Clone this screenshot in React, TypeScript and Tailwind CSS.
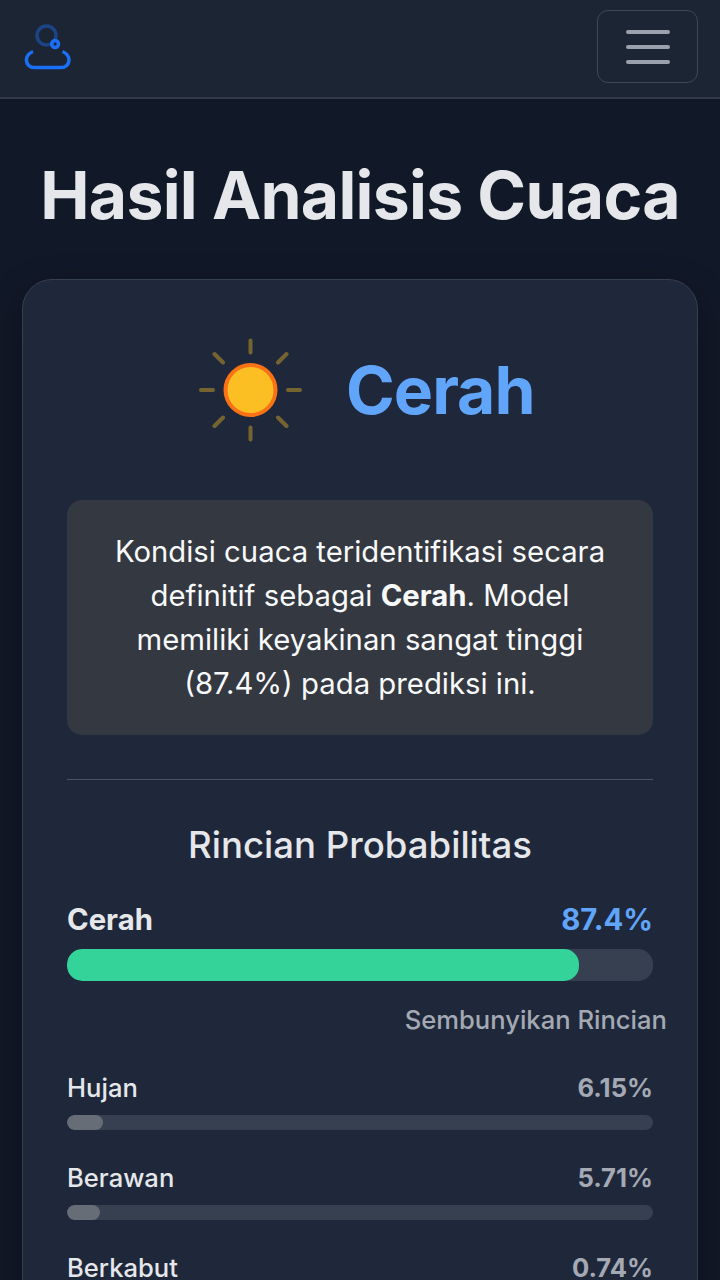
const rows = [
  { label: 'Hujan', value: '6.15%', width: '6.15%' },
  { label: 'Berawan', value: '5.71%', width: '5.71%' },
  { label: 'Berkabut', value: '0.74%', width: '0.74%' },
];

function CloudLogo() {
  return (
    <svg className="h-[54px] w-[54px]" viewBox="0 0 54 54" fill="none" stroke="#1a6ff5" strokeWidth="3.5" strokeLinecap="butt">
      <circle cx="26.5" cy="16.400" r="9.500" opacity="0.42" />
      <circle cx="35.100" cy="25" r="3.400" />
      <path d="M13 32.500C8.500 34.500 6.400 37.500 6.400 41C6.400 45.300 9.800 48.600 14.500 48.600H41C45.600 48.600 49 45.300 49 41C49 37.500 47 34.500 42.500 32.500" />
    </svg>
  );
}

function Sun() {
  return (
    <svg className="h-[108px] w-[108px]" viewBox="-54.500 -54 108 108" fill="none" strokeLinecap="round">
      <g stroke="#fbbf24" strokeWidth="4" opacity="0.4">
        <path d="M0-49.500V-37.500M0 37.500V49.500M-49.500 0H-37.500M37.500 0H49.500M-36-36L-27.500-27.500M27.500 27.500L36 36M-36 36L-27.500 27.500M27.500-27.500L36-36" />
      </g>
      <circle r="25" fill="#fbbf24" stroke="#f97316" strokeWidth="4" />
    </svg>
  );
}

export default function App() {
  return (
    <div className="h-[1280px] overflow-hidden bg-[#111827] font-['Inter',sans-serif] text-[#e5e7eb]">
      <header className="flex h-[99px] items-start justify-between border-b-2 border-[#323a49] bg-[#1c2534] pt-[10px] pr-[22px] pl-[20px]">
        <div className="pt-[9px]"><CloudLogo /></div>
        <button aria-label="Menu" className="flex h-[73px] w-[101px] flex-col items-center justify-center gap-[11px] rounded-[11px] border border-[#3f4756]">
          <span className="h-1 w-11 rounded-full bg-[#9ba1ac]" />
          <span className="h-1 w-11 rounded-full bg-[#9ba1ac]" />
          <span className="h-1 w-11 rounded-full bg-[#9ba1ac]" />
        </button>
      </header>
      <main className="px-[22px] pt-[56px]">
        <h1 className="-mx-5 text-center text-[66px] leading-[80px] font-bold tracking-[-0.720px] whitespace-nowrap">Hasil Analisis Cuaca</h1>
        <section className="mt-[44px] h-[1100px] rounded-[30px] border border-[#373f50] bg-[#1f283a] px-[44px] pt-[56px] shadow-[0_12px_36px_rgba(0,0,0,0.3)]">
          <div className="flex h-[108px] items-center gap-[42px] pl-[129px]">
            <Sun />
            <h2 className="text-[66px] leading-[80px] font-bold tracking-[-1px] text-[#60a5fa]">Cerah</h2>
          </div>
          <p className="mt-[56px] h-[235px] rounded-[15px] bg-[#343840] pt-[30px] text-center text-[29.300px] leading-[44px] text-[#f8f9fa]">
            Kondisi cuaca teridentifikasi secara<br />definitif sebagai <b>Cerah</b>. Model<br />memiliki keyakinan sangat tinggi<br />(87.4%) pada prediksi ini.
          </p>
          <hr className="mt-[44px] border-0 border-t border-[#4b5362]" />
          <h3 className="mt-[43px] text-center text-[36.600px] leading-[44px] font-medium">Rincian Probabilitas</h3>
          <div className="mt-[31px] flex justify-between text-[29.300px] leading-[44px] font-bold">
            <span>Cerah</span><span className="text-[#60a5fa]">87.4%</span>
          </div>
          <div className="mt-[7px] h-[32px] overflow-hidden rounded-[15px] bg-[#374051]">
            <div className="h-full w-[87.4%] rounded-[15px] bg-[#34d399]" />
          </div>
          <div className="-mr-[14px] mt-[19px] text-right text-[25.600px] leading-[39px] font-medium text-[#a4a9b4]">Sembunyikan Rincian</div>
          <div className="mt-[29px] flex flex-col gap-[28px]">
            {rows.map((row) => (
              <div key={row.label}>
                <div className="flex justify-between text-[25.600px] leading-[39px]">
                  <span className="font-medium">{row.label}</span><span className="font-bold text-[#a4a9b4]">{row.value}</span>
                </div>
                <div className="mt-[8px] h-[15px] overflow-hidden rounded-full bg-[#374051]">
                  <div className="h-full rounded-full bg-[#666d77]" style={{ width: row.width }} />
                </div>
              </div>
            ))}
          </div>
        </section>
      </main>
    </div>
  );
}
